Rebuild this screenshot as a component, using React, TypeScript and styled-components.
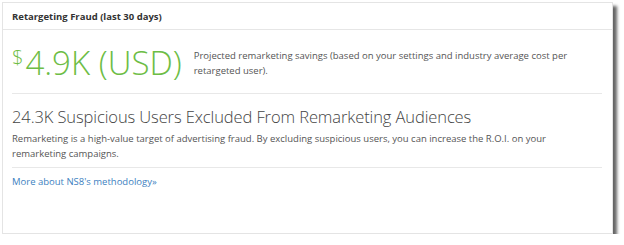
import React from "react";
import styled, { createGlobalStyle } from "styled-components";

const GlobalStyle = createGlobalStyle`
  body {
    margin: 0;
    background: #ffffff;
    font-family: "Open Sans", "Liberation Sans", sans-serif;
  }
`;

const Page = styled.div`
  padding: 2px 0 0 2px;
`;

const Card = styled.section`
  box-sizing: border-box;
  width: 611px;
  height: 232px;
  border: 1px solid #e4e4e4;
  background: #fff;
  box-shadow: 4px 4px 3px rgba(0, 0, 0, 0.6);
  display: flex;
  flex-direction: column;
`;

const Header = styled.div`
  height: 26px;
  border-bottom: 1px solid #e6e6e6;
  padding-left: 9px;
  display: flex;
  align-items: center;
  font-size: 9.5px;
  font-weight: 700;
  color: #333;
`;

const Body = styled.div`
  padding: 0 10px 0 9px;
`;

const Section = styled.div<{ $last?: boolean }>`
  border-bottom: ${(p) => (p.$last ? "none" : "1px solid #e8e8e8")};
`;

const SavingsRow = styled.div`
  display: flex;
  align-items: flex-start;
  gap: 12px;
  padding: 10px 0 7px;
`;

const Amount = styled.div`
  display: flex;
  align-items: flex-start;
  color: #6dbd45;
  font-weight: 300;
  font-size: 33px;
  line-height: 46px;
  white-space: nowrap;
`;

const Currency = styled.span`
  font-size: 20px;
  line-height: 20px;
  margin-top: 8px;
  margin-right: 2px;
`;

const Note = styled.p`
  margin: 8px 0 0;
  font-size: 9.5px;
  line-height: 15px;
  color: #555;
`;

const Heading = styled.h2`
  margin: 12px 0 3px;
  font-size: 16.5px;
  font-weight: 300;
  line-height: 22px;
  letter-spacing: -0.1px;
  color: #444;
`;

const Text = styled.p`
  margin: 0 0 6px;
  font-size: 9.5px;
  line-height: 15px;
  color: #555;
`;

const Link = styled.a`
  display: inline-block;
  margin-top: 6px;
  font-size: 9.5px;
  line-height: 15px;
  color: #3d7fc1;
  text-decoration: none;
`;

export default function App() {
  return (
    <>
      <GlobalStyle />
      <Page>
        <Card>
          <Header>Retargeting Fraud (last 30 days)</Header>
          <Body>
            <Section>
              <SavingsRow>
                <Amount>
                  <Currency>$</Currency>4.9K (USD)
                </Amount>
                <Note>
                  Projected remarketing savings (based on your settings and
                  industry average cost per retargeted user).
                </Note>
              </SavingsRow>
            </Section>
            <Section>
              <Heading>24.3K Suspicious Users Excluded From Remarketing Audiences</Heading>
              <Text>
                Remarketing is a high-value target of advertising fraud. By
                excluding suspicious users, you can increase the R.O.I. on your
                remarketing campaigns.
              </Text>
            </Section>
            <Section $last>
              <Link href="#">More about NS8's methodology»</Link>
            </Section>
          </Body>
        </Card>
      </Page>
    </>
  );
}
